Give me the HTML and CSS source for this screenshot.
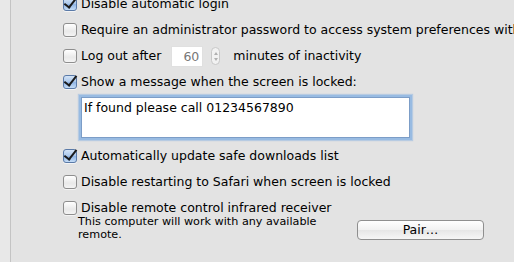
FILE: index.html
```html
<!DOCTYPE html>
<html>
<head>
<meta charset="utf-8">
<link rel="stylesheet" href="styles.css">
</head>
<body>
<div class="panel">
  <div class="list">
    <div class="row"><span class="cb checked"></span><span class="label">Disable automatic login</span></div>
    <div class="row"><span class="cb"></span><span class="label">Require an administrator password to access system preferences with</span></div>
    <div class="row"><span class="cb"></span><span class="label">Log out after</span><span class="num">60</span><span class="stepper"><i class="up"></i><i class="down"></i></span><span class="label">minutes of inactivity</span></div>
    <div class="row"><span class="cb checked"></span><span class="label">Show a message when the screen is locked:</span></div>
    <div class="textarea">If found please call 01234567890</div>
    <div class="row"><span class="cb checked"></span><span class="label">Automatically update safe downloads list</span></div>
    <div class="row"><span class="cb"></span><span class="label">Disable restarting to Safari when screen is locked</span></div>
    <div class="row"><span class="cb"></span><span class="label">Disable remote control infrared receiver</span></div>
    <div class="desc-row">
      <div class="desc">This computer will work with any available remote.</div>
      <div class="button">Pair…</div>
    </div>
  </div>
</div>
</body>
</html>
```
FILE: styles.css
```css
html, body {
  margin: 0;
  padding: 0;
  width: 514px;
  height: 262px;
  overflow: hidden;
  background: #e8e8e8;
  font-family: "DejaVu Sans", "Liberation Sans", sans-serif;
  font-size: 12.5px;
  color: #000;
}
.panel {
  margin-left: 10px;
  height: 262px;
  border-left: 1px solid #c4c4c4;
  background: #e3e3e3;
  overflow: hidden;
}
.list {
  margin-top: -9px;
  padding-left: 52px;
  display: flex;
  flex-direction: column;
}
.row {
  height: 26px;
  display: flex;
  align-items: center;
  white-space: nowrap;
}
.cb {
  flex: none;
  width: 12px;
  height: 12px;
  border: 1px solid #8e8e8e;
  border-radius: 3px;
  background: linear-gradient(#ffffff, #e9e9e9 60%, #f4f4f4);
  margin-right: 4px;
  position: relative;
  box-shadow: 0 1px 0 rgba(255,255,255,0.6);
}
.cb.checked {
  border-color: #5a7aa8;
  background: linear-gradient(#d4e4f7, #a9c6ea 50%, #8fb4e4 51%, #c4dcf6);
}
.cb.checked::after {
  content: "";
  position: absolute;
  left: 3px;
  top: -3px;
  width: 5px;
  height: 11px;
  border-right: 2.5px solid #1a1a1a;
  border-bottom: 2px solid #1a1a1a;
  transform: rotate(38deg);
}
.label { line-height: 16px; }
.num {
  margin-left: 10px;
  width: 32px;
  height: 21px;
  box-sizing: border-box;
  background: #fff;
  border: 1px solid #e0e0e0;
  color: #777;
  text-align: right;
  padding-right: 3px;
  line-height: 20px;
}
.stepper {
  margin-left: 8px;
  margin-right: 13px;
  width: 9px;
  height: 18px;
  box-sizing: border-box;
  border: 1px solid #c8c8c8;
  border-radius: 5px;
  background: #f2f2f2;
  display: flex;
  flex-direction: column;
  align-items: center;
  justify-content: space-around;
  padding: 2px 0;
}
.stepper i {
  width: 0;
  height: 0;
  border-left: 2px solid transparent;
  border-right: 2px solid transparent;
}
.stepper .up { border-bottom: 3px solid #b0b0b0; }
.stepper .down { border-top: 3px solid #b0b0b0; }
.textarea {
  margin-left: 18px;
  width: 329px;
  height: 41px;
  box-sizing: border-box;
  background: #fff;
  border: 1px solid #7c9dc7;
  box-shadow: 0 0 0 2px #98bbe2, 0 0 1px 3px rgba(140,180,225,0.5);
  padding: 2px 0 0 2px;
  margin-top: 2px;
  margin-bottom: 5px;
  line-height: 16px;
}
.desc-row {
  display: flex;
  align-items: flex-start;
  margin-top: -6px;
}
.desc {
  margin-left: 15px;
  width: 258px;
  font-size: 11.2px;
  line-height: 13px;
}
.button {
  margin-left: 21px;
  margin-top: 5px;
  width: 127px;
  height: 20px;
  box-sizing: border-box;
  border: 1px solid #8f8f8f;
  border-radius: 4px;
  background: linear-gradient(#ffffff, #f1f1f1 50%, #e6e6e6 51%, #f6f6f6);
  text-align: center;
  line-height: 18px;
  font-size: 12.5px;
}
```
